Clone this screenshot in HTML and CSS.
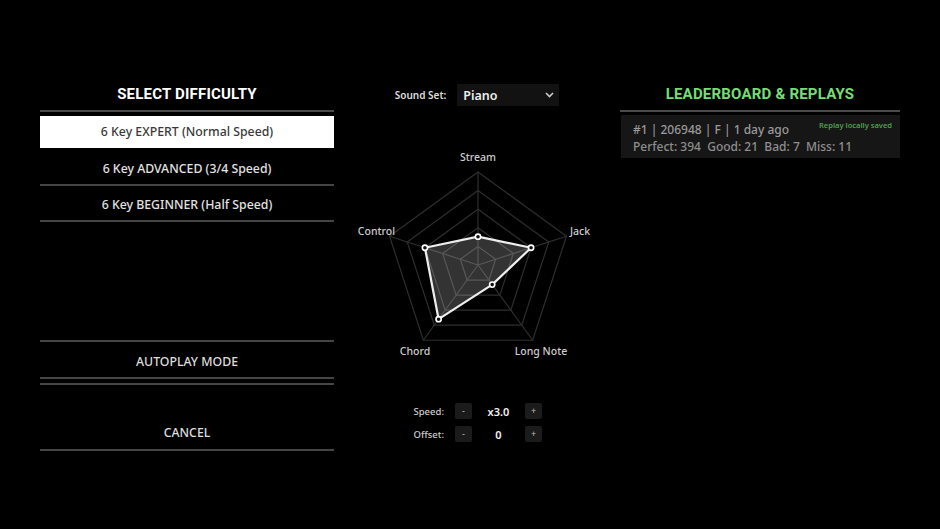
FILE: index.html
```html
<!DOCTYPE html>
<html lang="en">
<head>
  <meta charset="UTF-8">
  <meta name="viewport" content="width=device-width, initial-scale=1.0">
  <title>Song Setup</title>
  <link rel="stylesheet" href="styles.css">
</head>
<body>
  <div class="screen">
    <!-- left: difficulty list -->
    <div class="panel panel-left">
      <div class="panel-title">SELECT DIFFICULTY</div>
      <div class="difficulty-list">
        <div class="difficulty-item selected">6 Key EXPERT (Normal Speed)</div>
        <div class="difficulty-item">6 Key ADVANCED (3/4 Speed)</div>
        <div class="difficulty-item">6 Key BEGINNER (Half Speed)</div>
      </div>
      <div class="bottom-actions">
        <div class="action-button autoplay">AUTOPLAY MODE</div>
        <div class="action-button cancel">CANCEL</div>
      </div>
    </div>

    <!-- middle: sound set, chart radar, speed settings -->
    <div class="panel panel-middle">
      <div class="sound-set">
        <span class="sound-set-label">Sound Set:</span>
        <div class="select-box">
          <span>Piano</span>
          <svg class="chevron" width="9" height="6" viewBox="0 0 9 6"><path d="M1 1 L4.5 4.5 L8 1" fill="none" stroke="#ccc" stroke-width="1.6"/></svg>
        </div>
      </div>

      <svg class="radar" width="240" height="222" viewBox="0 0 240 222">
        <g class="radar-grid">
          <polygon points="120,27 208.45,91.26 174.67,195.24 65.33,195.24 31.55,91.26"/>
          <polygon points="120,45.6 190.76,97.01 163.73,180.19 76.27,180.19 49.24,97.01"/>
          <polygon points="120,64.2 173.07,102.76 152.8,165.14 87.2,165.14 66.93,102.76"/>
          <polygon points="120,82.8 155.38,108.51 141.87,150.09 98.13,150.09 84.62,108.51"/>
          <polygon points="120,101.4 137.69,114.25 130.93,135.05 109.07,135.05 102.31,114.25"/>
          <line x1="120" y1="120" x2="120" y2="27"/>
          <line x1="120" y1="120" x2="208.45" y2="91.26"/>
          <line x1="120" y1="120" x2="174.67" y2="195.24"/>
          <line x1="120" y1="120" x2="65.33" y2="195.24"/>
          <line x1="120" y1="120" x2="31.55" y2="91.26"/>
        </g>
        <polygon class="radar-area" points="120,91.7 173.07,102.76 134.2,139.6 80.6,174.2 66.93,102.76"/>
        <g class="radar-dots">
          <circle cx="120" cy="91.7" r="2.6"/>
          <circle cx="173.07" cy="102.76" r="2.6"/>
          <circle cx="134.2" cy="139.6" r="2.6"/>
          <circle cx="80.6" cy="174.2" r="2.6"/>
          <circle cx="66.93" cy="102.76" r="2.6"/>
        </g>
        <g class="radar-labels">
          <text x="120" y="16" text-anchor="middle">Stream</text>
          <text x="212" y="90">Jack</text>
          <text x="183" y="210" text-anchor="middle">Long Note</text>
          <text x="57" y="210" text-anchor="middle">Chord</text>
          <text x="37" y="90" text-anchor="end">Control</text>
        </g>
      </svg>

      <div class="tuning">
        <span class="tuning-label">Speed:</span>
        <div class="step-button">-</div>
        <span class="tuning-value">x3.0</span>
        <div class="step-button">+</div>

        <span class="tuning-label">Offset:</span>
        <div class="step-button">-</div>
        <span class="tuning-value">0</span>
        <div class="step-button">+</div>
      </div>
    </div>

    <!-- right: leaderboard -->
    <div class="panel panel-right">
      <div class="panel-title green">LEADERBOARD &amp; REPLAYS</div>
      <div class="score-card">
        <div class="score-head">
          <span>#1 | 206948 | F | 1 day ago</span>
          <span class="replay-tag">Replay locally saved</span>
        </div>
        <div class="score-judges">Perfect: 394&nbsp; Good: 21&nbsp; Bad: 7&nbsp; Miss: 11</div>
      </div>
    </div>
  </div>
</body>
</html>
```

FILE: styles.css
```css
body {
  margin: 0;
  padding: 0;
  background-color: #000;
  color: #ddd;
  font-family: "Noto Sans", "Open Sans", sans-serif;
  overflow: hidden;
}

.screen {
  display: grid;
  grid-template-columns: 294px 1fr 280px;
  padding: 84px 40px 0;
  height: 529px;
  box-sizing: border-box;
}

.panel {
  display: flex;
  flex-direction: column;
}

.panel-title {
  font-family: Roboto, "Noto Sans", sans-serif;
  font-weight: 700;
  font-size: 15px;
  letter-spacing: 0.2px;
  line-height: 20px;
  text-align: center;
  color: #fff;
  padding-bottom: 6px;
  border-bottom: 2px solid #4a4a4a;
}

.panel-title.green {
  color: #74dd74;
}

/* difficulty list */
.difficulty-list {
  display: flex;
  flex-direction: column;
  margin-top: 4px;
}

.difficulty-item {
  height: 34px;
  line-height: 37px;
  text-align: center;
  font-size: 12.3px;
  font-weight: 500;
  color: #e2e2e2;
  border-bottom: 2px solid #454545;
}

.difficulty-item.selected {
  height: 32px;
  line-height: 32px;
  background-color: #fff;
  color: #3a3a3a;
  border-bottom: none;
  margin-bottom: 2px;
}

.bottom-actions {
  margin-top: 118px;
  display: flex;
  flex-direction: column;
}

.action-button {
  text-align: center;
  font-size: 12.3px;
  font-weight: 500;
  color: #ddd;
}

.autoplay {
  border-top: 2px solid #454545;
  border-bottom: 2px solid #454545;
  padding: 11px 0 6px;
  line-height: 18px;
}

.cancel {
  margin-top: 4px;
  border-top: 2px solid #454545;
  border-bottom: 2px solid #454545;
  padding: 39px 0 7px;
  line-height: 18px;
}

/* middle column */
.panel-middle {
  align-items: center;
}

.sound-set {
  display: flex;
  align-items: center;
  gap: 11px;
}

.sound-set-label {
  font-size: 10px;
  font-weight: 600;
  color: #ddd;
}

.select-box {
  width: 102px;
  height: 22px;
  box-sizing: border-box;
  background-color: #121212;
  display: flex;
  align-items: center;
  justify-content: space-between;
  padding: 0 5px 0 6px;
  font-size: 12.5px;
  font-weight: 600;
  color: #eee;
}

.radar {
  margin-top: 39px;
  margin-left: 1px;
}

.radar-grid polygon,
.radar-grid line {
  fill: none;
  stroke: #2e2e2e;
  stroke-width: 1.2;
}

.radar-area {
  fill: rgba(255, 255, 255, 0.2);
  stroke: #eee;
  stroke-width: 2.2;
  stroke-linejoin: round;
}

.radar-dots circle {
  fill: #111;
  stroke: #fff;
  stroke-width: 1.6;
}

.radar-labels text {
  font-family: "Noto Sans", sans-serif;
  font-size: 10.5px;
  font-weight: 500;
  fill: #ccc;
}

.tuning {
  display: grid;
  grid-template-columns: 32px 17px 53px 17px;
  row-gap: 7px;
  align-items: center;
  margin-top: 36px;
  margin-left: 11px;
}

.tuning-label {
  font-size: 9.5px;
  font-weight: 500;
  color: #ccc;
  text-align: right;
  margin-left: -30px;
  margin-right: 11px;
}

.step-button {
  width: 17px;
  height: 16px;
  background-color: #1b1b1b;
  border-radius: 2px;
  color: #bbb;
  font-size: 9px;
  line-height: 16px;
  text-align: center;
}

.tuning-value {
  text-align: center;
  font-size: 11px;
  font-weight: 600;
  color: #f2f2f2;
}

/* leaderboard */
.score-card {
  margin-top: 3px;
  margin-left: 1px;
  background-color: #161616;
  padding: 6px 8px 3px 12px;
  height: 43px;
  box-sizing: border-box;
}

.score-head {
  display: flex;
  justify-content: space-between;
  align-items: flex-start;
  font-size: 12px;
  font-weight: 500;
  color: #9a9a9a;
  line-height: 18px;
}

.replay-tag {
  font-size: 7.5px;
  font-weight: 600;
  color: #4f9f4f;
  line-height: 10px;
  margin-top: -1px;
}

.score-judges {
  font-size: 12px;
  font-weight: 500;
  color: #8e8e8e;
  line-height: 16px;
}
```
